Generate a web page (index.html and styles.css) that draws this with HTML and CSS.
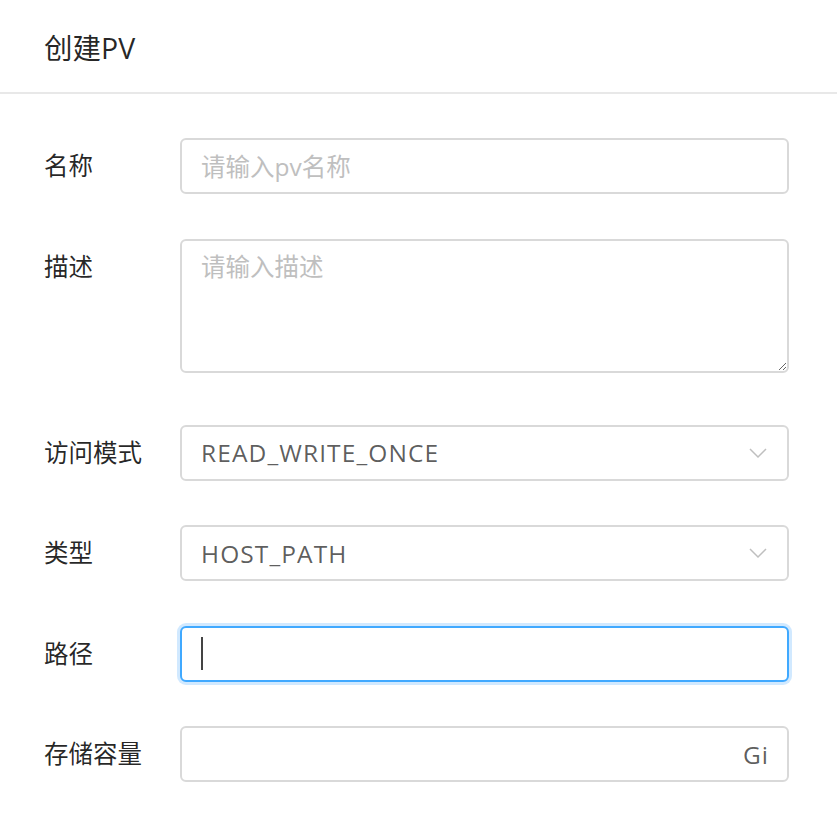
FILE: index.html
```html
<!DOCTYPE html>
<html lang="zh-CN">
<head>
  <meta charset="UTF-8">
  <title>创建PV</title>
  <link rel="stylesheet" href="styles.css">
</head>
<body>

<!-- 标题 -->
<div class="modal-header">
  <div class="modal-title">创建PV</div>
</div>

<!-- 表单 -->
<form class="pv-form">
  <div class="form-row">
    <label class="form-label" for="pvName">名称</label>
    <input class="form-input" id="pvName" type="text" placeholder="请输入pv名称">
  </div>

  <div class="form-row row-textarea">
    <label class="form-label" for="pvDesc">描述</label>
    <textarea class="form-input form-textarea" id="pvDesc" placeholder="请输入描述"></textarea>
  </div>

  <div class="form-row">
    <label class="form-label">访问模式</label>
    <div class="form-input form-select">
      <span class="select-value">READ_WRITE_ONCE</span>
      <svg class="select-arrow" width="18" height="12" viewBox="0 0 18 12">
        <path d="M1 2 L9 10 L17 2" fill="none" stroke="#bfbfbf" stroke-width="1.5"/>
      </svg>
    </div>
  </div>

  <div class="form-row">
    <label class="form-label">类型</label>
    <div class="form-input form-select">
      <span class="select-value">HOST_PATH</span>
      <svg class="select-arrow" width="18" height="12" viewBox="0 0 18 12">
        <path d="M1 2 L9 10 L17 2" fill="none" stroke="#bfbfbf" stroke-width="1.5"/>
      </svg>
    </div>
  </div>

  <div class="form-row">
    <label class="form-label">路径</label>
    <div class="form-input is-focused"><span class="caret"></span></div>
  </div>

  <div class="form-row">
    <label class="form-label" for="pvSize">存储容量</label>
    <div class="form-input input-affix">
      <input id="pvSize" type="text">
      <span class="suffix">Gi</span>
    </div>
  </div>
</form>

</body>
</html>
```

FILE: styles.css
```css
body {
  margin: 0;
  background: #fff;
  font-family: "Open Sans", "Noto Sans CJK SC", sans-serif;
  color: rgba(0, 0, 0, 0.65);
}

.modal-header {
  height: 92px;
  padding: 0 44px;
  display: flex;
  align-items: center;
  border-bottom: 2px solid #e8e8e8;
}

.modal-title {
  font-size: 28.5px;
  color: rgba(0, 0, 0, 0.85);
}

.pv-form {
  padding: 44px 48px 0 44px;
}

.form-row {
  display: grid;
  grid-template-columns: 136px 1fr;
  margin-bottom: 44.5px;
}

.row-textarea {
  margin-bottom: 52px;
}

.form-label {
  font-size: 24.5px;
  line-height: 56px;
  color: rgba(0, 0, 0, 0.85);
}

.form-input {
  box-sizing: border-box;
  width: 100%;
  height: 56px;
  margin: 0;
  padding: 0 19px;
  border: 2px solid #d9d9d9;
  border-radius: 6px;
  background: #fff;
  font-family: inherit;
  font-size: 24.5px;
  color: rgba(0, 0, 0, 0.65);
  outline: none;
}

.form-input::placeholder {
  color: #bfbfbf;
}

.form-textarea {
  height: 134px;
  padding: 8px 19px;
  line-height: 36px;
  resize: vertical;
  display: block;
}

.form-select {
  display: flex;
  align-items: center;
  justify-content: space-between;
}

.select-value {
  letter-spacing: 1.1px;
}

.select-arrow {
  margin-right: 1px;
}

.is-focused {
  display: flex;
  align-items: center;
  border-color: #40a9ff;
  box-shadow: 0 0 0 3px rgba(24, 144, 255, 0.2);
}

.caret {
  width: 2px;
  height: 33px;
  background: #444;
}

.input-affix {
  display: flex;
  align-items: center;
}

.input-affix input {
  flex: 1;
  min-width: 0;
  border: none;
  outline: none;
  padding: 0;
  font: inherit;
  background: transparent;
}

.suffix {
  color: rgba(0, 0, 0, 0.65);
  letter-spacing: 1px;
  margin-right: -1px;
}
```
